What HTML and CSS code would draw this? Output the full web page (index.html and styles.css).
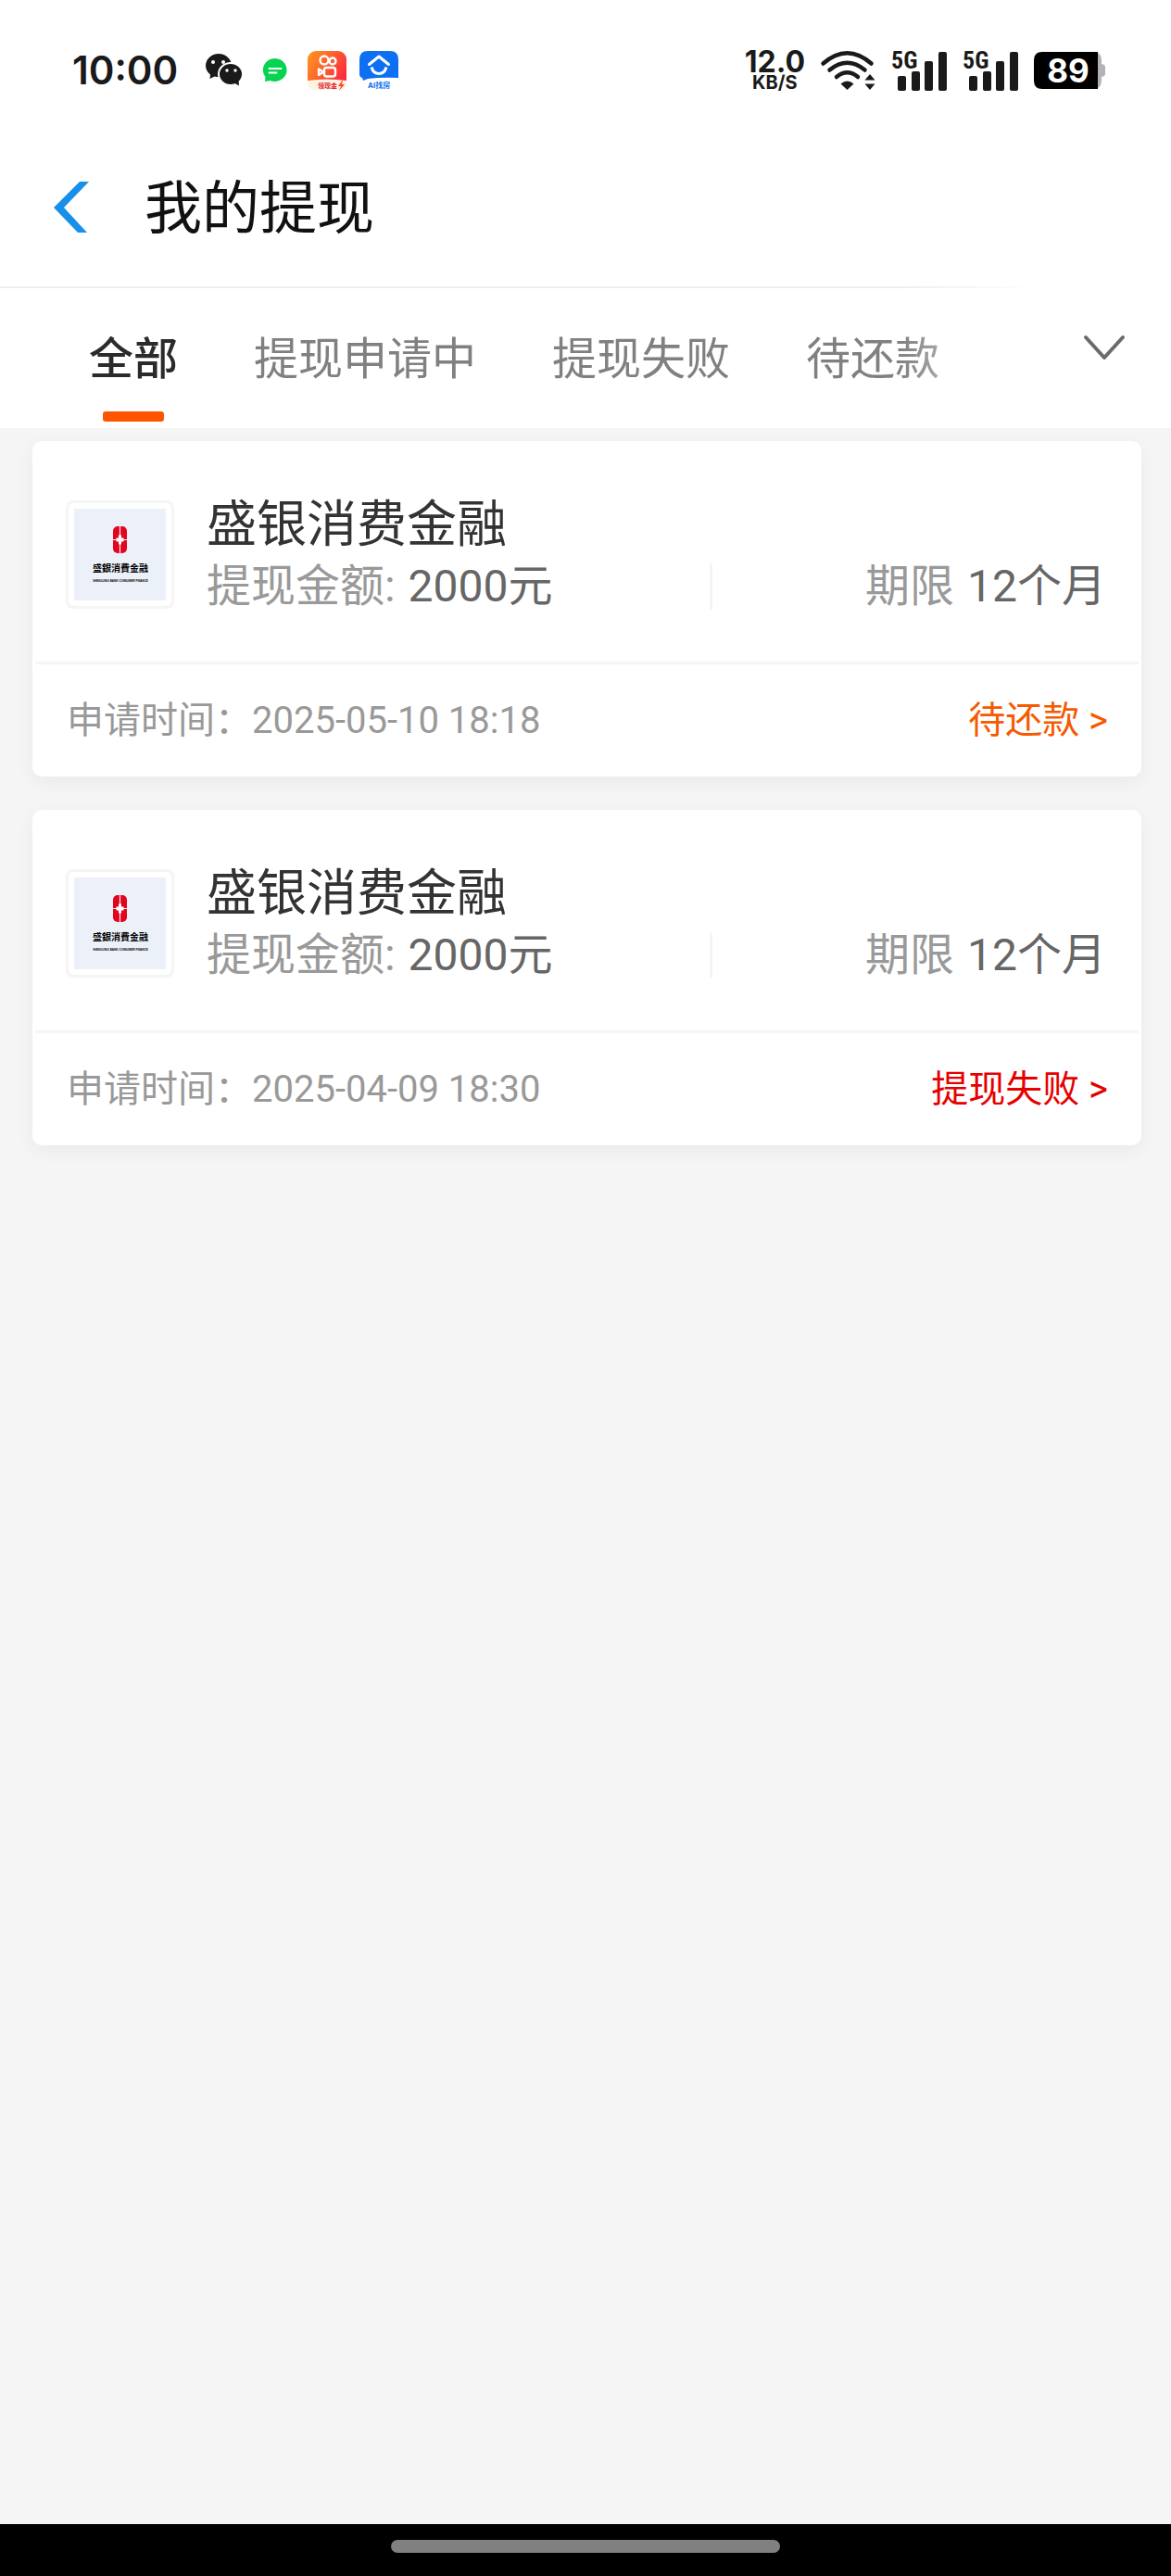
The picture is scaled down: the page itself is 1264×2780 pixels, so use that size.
FILE: index.html
```html
<!DOCTYPE html>
<html lang="zh-CN">
<head>
  <meta charset="UTF-8">
  <title>我的提现</title>
  <meta name="viewport" content="width=device-width, initial-scale=1.0">
  <link rel="stylesheet" href="styles.css">
</head>
<body>

<div class="status-bar">
  <div class="status-left">
    <span class="clock">10:00</span>
    <div class="app-icons">
      <svg class="icon-wechat" width="40" height="36" viewBox="0 0 40 36">
        <path d="M14 0C6 0 0 6 0 13c0 4 2 7 5 9.500L4.500 27l5-2.500c1.500.5 3 .7 4.500.7C22 25.200 28 20 28 13S22 0 14 0z" fill="#1a1a1a"/>
        <ellipse cx="27" cy="22" rx="13" ry="12" fill="#1a1a1a" stroke="#fff" stroke-width="2"/>
        <path d="M30 31l6 3.500-.5-6z" fill="#1a1a1a"/>
        <circle cx="8" cy="9" r="2" fill="#fff"/>
        <circle cx="19" cy="9" r="2" fill="#fff"/>
        <circle cx="23" cy="18" r="1.700" fill="#fff"/>
        <circle cx="32" cy="18" r="1.700" fill="#fff"/>
      </svg>
      <svg class="icon-message" width="26" height="26" viewBox="0 0 26 26">
        <path d="M13 0a13 12.500 0 1 1-5.500 24L2 25l.5-5A13 12.500 0 0 1 13 0z" fill="#06d450"/>
        <path d="M6.500 11h13M6.500 15.500h8" stroke="#fff" stroke-width="1.800" stroke-linecap="round"/>
      </svg>
      <svg class="icon-video" width="42" height="43" viewBox="0 0 42 43">
        <defs>
          <linearGradient id="videoBg" x1="0" y1="0" x2="1" y2="0.600">
            <stop offset="0" stop-color="#ff9a1c"/>
            <stop offset="1" stop-color="#fb2b40"/>
          </linearGradient>
        </defs>
        <rect width="42" height="40" rx="9" fill="url(#videoBg)"/>
        <g fill="none" stroke="#fff" stroke-width="2.400">
          <circle cx="18" cy="10" r="4.500"/>
          <circle cx="27" cy="11" r="3.500"/>
          <rect x="18" y="18" width="12" height="9.500" rx="2.500"/>
          <path d="M12 19.500v6.500l5-3.200z" stroke-linejoin="round"/>
        </g>
        <path d="M0 32q21-3 42 0v2q0 8-8 8H8q-8 0-8-8z" fill="#fff3e4"/>
        <text x="11" y="39.500" class="badge-text" fill="#e0202c">领现金</text>
        <path d="M38 31l-5 7h3l-2 5 6-7h-3z" fill="#fb4b20"/>
      </svg>
      <svg class="icon-house" width="42" height="43" viewBox="0 0 42 43">
        <path d="M9 0h24q9 0 9 9v20q-18-1-33 1l-5 2-1-3q-3-1-3-4V9q0-9 9-9z" fill="#0d70f2"/>
        <g fill="none" stroke="#fff" stroke-width="3" stroke-linejoin="round">
          <path d="M10.500 14.500L21 6l10.500 8.500" stroke-linecap="round"/>
          <path d="M13 17.500q2 7 8 7t8-7"/>
        </g>
        <text x="9" y="40" class="badge-text" fill="#0d70f2">AI找房</text>
      </svg>
    </div>
  </div>

  <div class="status-right">
    <div class="net-speed">
      <span class="speed-value">12.0</span>
      <span class="speed-unit">KB/S</span>
    </div>
    <svg width="59" height="43" viewBox="0 0 59 43">
      <g fill="none" stroke="#1a1a1a" stroke-width="4.500" stroke-linecap="round">
        <path d="M2.500 13.500q26-22.500 52 0"/>
        <path d="M9.500 20.500q19-15.500 38 0"/>
        <path d="M17 28q11.500-9.500 23 0"/>
      </g>
      <path d="M21.500 35.500q7-6 14 0L28.500 42z" fill="#1a1a1a"/>
      <path d="M47.500 31.500l5.500-6.500 5.500 6.500zM47.500 35.500h11L53 42z" fill="#1a1a1a"/>
    </svg>
    <svg class="signal" width="60" height="43" viewBox="0 0 60 43">
      <text x="0" y="19" class="signal-text">5G</text>
      <g fill="#1a1a1a">
        <rect x="7" y="27" width="9" height="16" rx="2"/>
        <rect x="22" y="22" width="9" height="21" rx="2"/>
        <rect x="36" y="11" width="9" height="32" rx="2"/>
        <rect x="51" y="1" width="9" height="42" rx="2"/>
      </g>
    </svg>
    <svg class="signal" width="60" height="43" viewBox="0 0 60 43">
      <text x="0" y="19" class="signal-text">5G</text>
      <g fill="#1a1a1a">
        <rect x="7" y="27" width="9" height="16" rx="2"/>
        <rect x="22" y="22" width="9" height="21" rx="2"/>
        <rect x="36" y="11" width="9" height="32" rx="2"/>
        <rect x="51" y="1" width="9" height="42" rx="2"/>
      </g>
    </svg>
    <svg class="battery" width="78" height="40" viewBox="0 0 78 40">
      <path d="M60 0h4q9 0 9 9v4q4 1 4 3v8q0 2-4 3v4q0 9-9 9h-4z" fill="#b3b3b3"/>
      <path d="M9 0h60v40H9q-9 0-9-9V9q0-9 9-9z" fill="#000"/>
      <text x="37" y="33" text-anchor="middle" class="battery-text">89</text>
    </svg>
  </div>
</div>

<header class="header">
  <a href="#" class="back" aria-label="返回">
    <svg width="38" height="56" viewBox="0 0 38 56">
      <path d="M28 0h10L11 28l25 27H26L0 28z" fill="#1890ea"/>
    </svg>
  </a>
  <h1>我的提现</h1>
</header>

<nav class="tab-bar">
  <div class="tabs">
    <button type="button" class="tab active">全部</button>
    <button type="button" class="tab">提现申请中</button>
    <button type="button" class="tab">提现失败</button>
    <button type="button" class="tab">待还款</button>
  </div>
  <button type="button" class="more" aria-label="展开">
    <svg width="44" height="28" viewBox="0 0 44 28">
      <path d="M2 2l20 22L42 2" fill="none" stroke="#6b6b6b" stroke-width="4" stroke-linecap="round" stroke-linejoin="round"/>
    </svg>
  </button>
</nav>

<main class="list">
  <article class="card">
    <div class="card-body">
      <div class="logo">
        <svg viewBox="0 0 99 99">
          <rect width="99" height="99" rx="1" fill="#ecf0f9"/>
          <rect x="42" y="19" width="15" height="29" rx="5" fill="#e3051f"/>
          <path d="M49.500 19v29M42 33.500h15" stroke="#ecf0f9" stroke-width="1.200"/>
          <path d="M48 28.500h3v3h2.500v4H51v3h-3v-3h-2.500v-4H48z" fill="#fff"/>
          <text x="50" y="68" text-anchor="middle" class="logo-name">盛銀消費金融</text>
          <text x="50" y="79" text-anchor="middle" class="logo-sub">SHENGJING BANK CONSUMER FINANCE</text>
        </svg>
      </div>
      <div class="info">
        <h2>盛银消费金融</h2>
        <div class="detail">
          <p class="amount">提现金额: <strong>2000元</strong></p>
          <p class="term"><span>期限 <strong>12个月</strong></span></p>
        </div>
      </div>
    </div>
    <div class="card-footer">
      <span class="time">申请时间：2025-05-10 18:18</span>
      <a href="#" class="state pending">待还款 &gt;</a>
    </div>
  </article>

  <article class="card">
    <div class="card-body">
      <div class="logo">
        <svg viewBox="0 0 99 99">
          <rect width="99" height="99" rx="1" fill="#ecf0f9"/>
          <rect x="42" y="19" width="15" height="29" rx="5" fill="#e3051f"/>
          <path d="M49.500 19v29M42 33.500h15" stroke="#ecf0f9" stroke-width="1.200"/>
          <path d="M48 28.500h3v3h2.500v4H51v3h-3v-3h-2.500v-4H48z" fill="#fff"/>
          <text x="50" y="68" text-anchor="middle" class="logo-name">盛銀消費金融</text>
          <text x="50" y="79" text-anchor="middle" class="logo-sub">SHENGJING BANK CONSUMER FINANCE</text>
        </svg>
      </div>
      <div class="info">
        <h2>盛银消费金融</h2>
        <div class="detail">
          <p class="amount">提现金额: <strong>2000元</strong></p>
          <p class="term"><span>期限 <strong>12个月</strong></span></p>
        </div>
      </div>
    </div>
    <div class="card-footer">
      <span class="time">申请时间：2025-04-09 18:30</span>
      <a href="#" class="state failed">提现失败 &gt;</a>
    </div>
  </article>
</main>

<div class="home-bar">
  <span class="home-pill"></span>
</div>

</body>
</html>
```
FILE: styles.css
```css
* {
  box-sizing: border-box;
}
body {
  display: flex;
  flex-direction: column;
  min-height: 100vh;
  margin: 0;
  background-color: #f5f5f5;
  font-family: Roboto, "Noto Sans CJK SC", sans-serif;
}
h1, h2, p {
  margin: 0;
  font-weight: normal;
}
button {
  border: none;
  padding: 0;
  background: none;
  font-family: inherit;
  cursor: pointer;
}
a {
  text-decoration: none;
}
svg {
  display: block;
  overflow: visible;
}

/* status bar */
.status-bar {
  display: flex;
  justify-content: space-between;
  align-items: center;
  height: 152px;
  padding: 0 70px 0 78px;
  background: #fff;
  color: #1a1a1a;
  font-family: Inter, sans-serif;
}
.status-left, .status-right, .app-icons {
  display: flex;
  align-items: center;
}
.status-left {
  gap: 30px;
}
.app-icons {
  gap: 22px;
}
.icon-house {
  margin-left: -8px;
}
.clock {
  font-size: 42px;
  font-weight: 600;
  line-height: 48px;
}
.badge-text {
  font: bold 7px Inter, "Noto Sans CJK SC", sans-serif;
}
.icon-house .badge-text {
  font-size: 8px;
}
.status-right {
  gap: 17px;
}
.net-speed {
  display: flex;
  flex-direction: column;
  align-items: center;
}
.speed-value {
  font-size: 32px;
  font-weight: 700;
  line-height: 26px;
}
.speed-unit {
  font-size: 20px;
  font-weight: 700;
  line-height: 18px;
}
.signal-text {
  font: bold 26px "Roboto Condensed", Roboto, sans-serif;
  fill: #1a1a1a;
}
.battery-text {
  font: bold 35px Inter, sans-serif;
  fill: #fff;
}

/* page title */
.header {
  display: flex;
  align-items: center;
  gap: 60px;
  height: 157px;
  padding: 0 58px 14px;
  background: #fff;
}
.header h1 {
  padding-top: 4px;
  color: #111;
  font-size: 62px;
  line-height: 80px;
}

/* tabs */
.tab-bar {
  display: flex;
  height: 153px;
  background: #fff;
}
.tabs {
  display: flex;
  flex: 1;
  gap: 82px;
  min-width: 0;
  padding-left: 96px;
  overflow: hidden;
  border-top: 2px solid #eee;
  -webkit-mask-image: linear-gradient(to right, #000 calc(100% - 150px), transparent);
  mask-image: linear-gradient(to right, #000 calc(100% - 150px), transparent);
}
.tab {
  position: relative;
  flex-shrink: 0;
  padding-top: 2px;
  color: #808080;
  font-size: 48px;
  line-height: 64px;
  white-space: nowrap;
}
.tab.active {
  color: #2b2b2b;
  font-weight: 500;
}
.tab.active::after {
  content: "";
  position: absolute;
  bottom: 7px;
  left: 50%;
  width: 66px;
  height: 11px;
  margin-left: -33px;
  border-radius: 3px;
  background: #ff5500;
}
.more {
  display: flex;
  justify-content: center;
  width: 144px;
  padding-top: 53px;
}

/* records */
.list {
  display: flex;
  flex: 1;
  flex-direction: column;
  gap: 36px;
  padding: 14px 32px 36px 35px;
}
.card {
  border-radius: 10px;
  background: #fff;
  box-shadow: 0 6px 20px rgba(0, 0, 0, 0.05);
}
.card-body {
  display: flex;
  gap: 35px;
  margin: 0 3px;
  padding: 56px 35px 50px 33px;
  border-bottom: 3px solid #f5f5f5;
}
.logo {
  align-self: center;
  width: 117px;
  padding: 6px;
  border: 3px solid #f5f5f5;
  border-radius: 8px;
}
.logo-name {
  font: bold 10px "Noto Sans CJK SC", sans-serif;
}
.logo-sub {
  font: bold 3px "Liberation Sans", sans-serif;
}
.info {
  flex: 1;
}
.info h2 {
  color: #333;
  font-size: 54px;
  line-height: 70px;
}
.detail {
  display: flex;
  justify-content: space-between;
  color: #999;
  font-size: 48px;
  line-height: 62px;
}
.detail strong {
  margin-left: 2px;
  color: #666;
  font-weight: normal;
}
.amount {
  flex: 1;
}
.term {
  display: flex;
  flex: 0 1 428px;
  align-items: center;
  justify-content: space-between;
}
.term::before {
  content: "";
  width: 3px;
  height: 50px;
  background: #f5f5f5;
}
.card-footer {
  display: flex;
  align-items: center;
  justify-content: space-between;
  height: 121px;
  padding: 0 36px 0 37px;
  font-size: 40px;
  line-height: 48px;
}
.time {
  color: #999;
}
.pending {
  color: #f55a00;
}
.failed {
  color: #e60000;
}

/* bottom gesture bar */
.home-bar {
  display: flex;
  justify-content: center;
  height: 56px;
  padding-top: 17px;
  background: #000;
}
.home-pill {
  width: 420px;
  height: 14px;
  border-radius: 7px;
  background: #808080;
}
```
